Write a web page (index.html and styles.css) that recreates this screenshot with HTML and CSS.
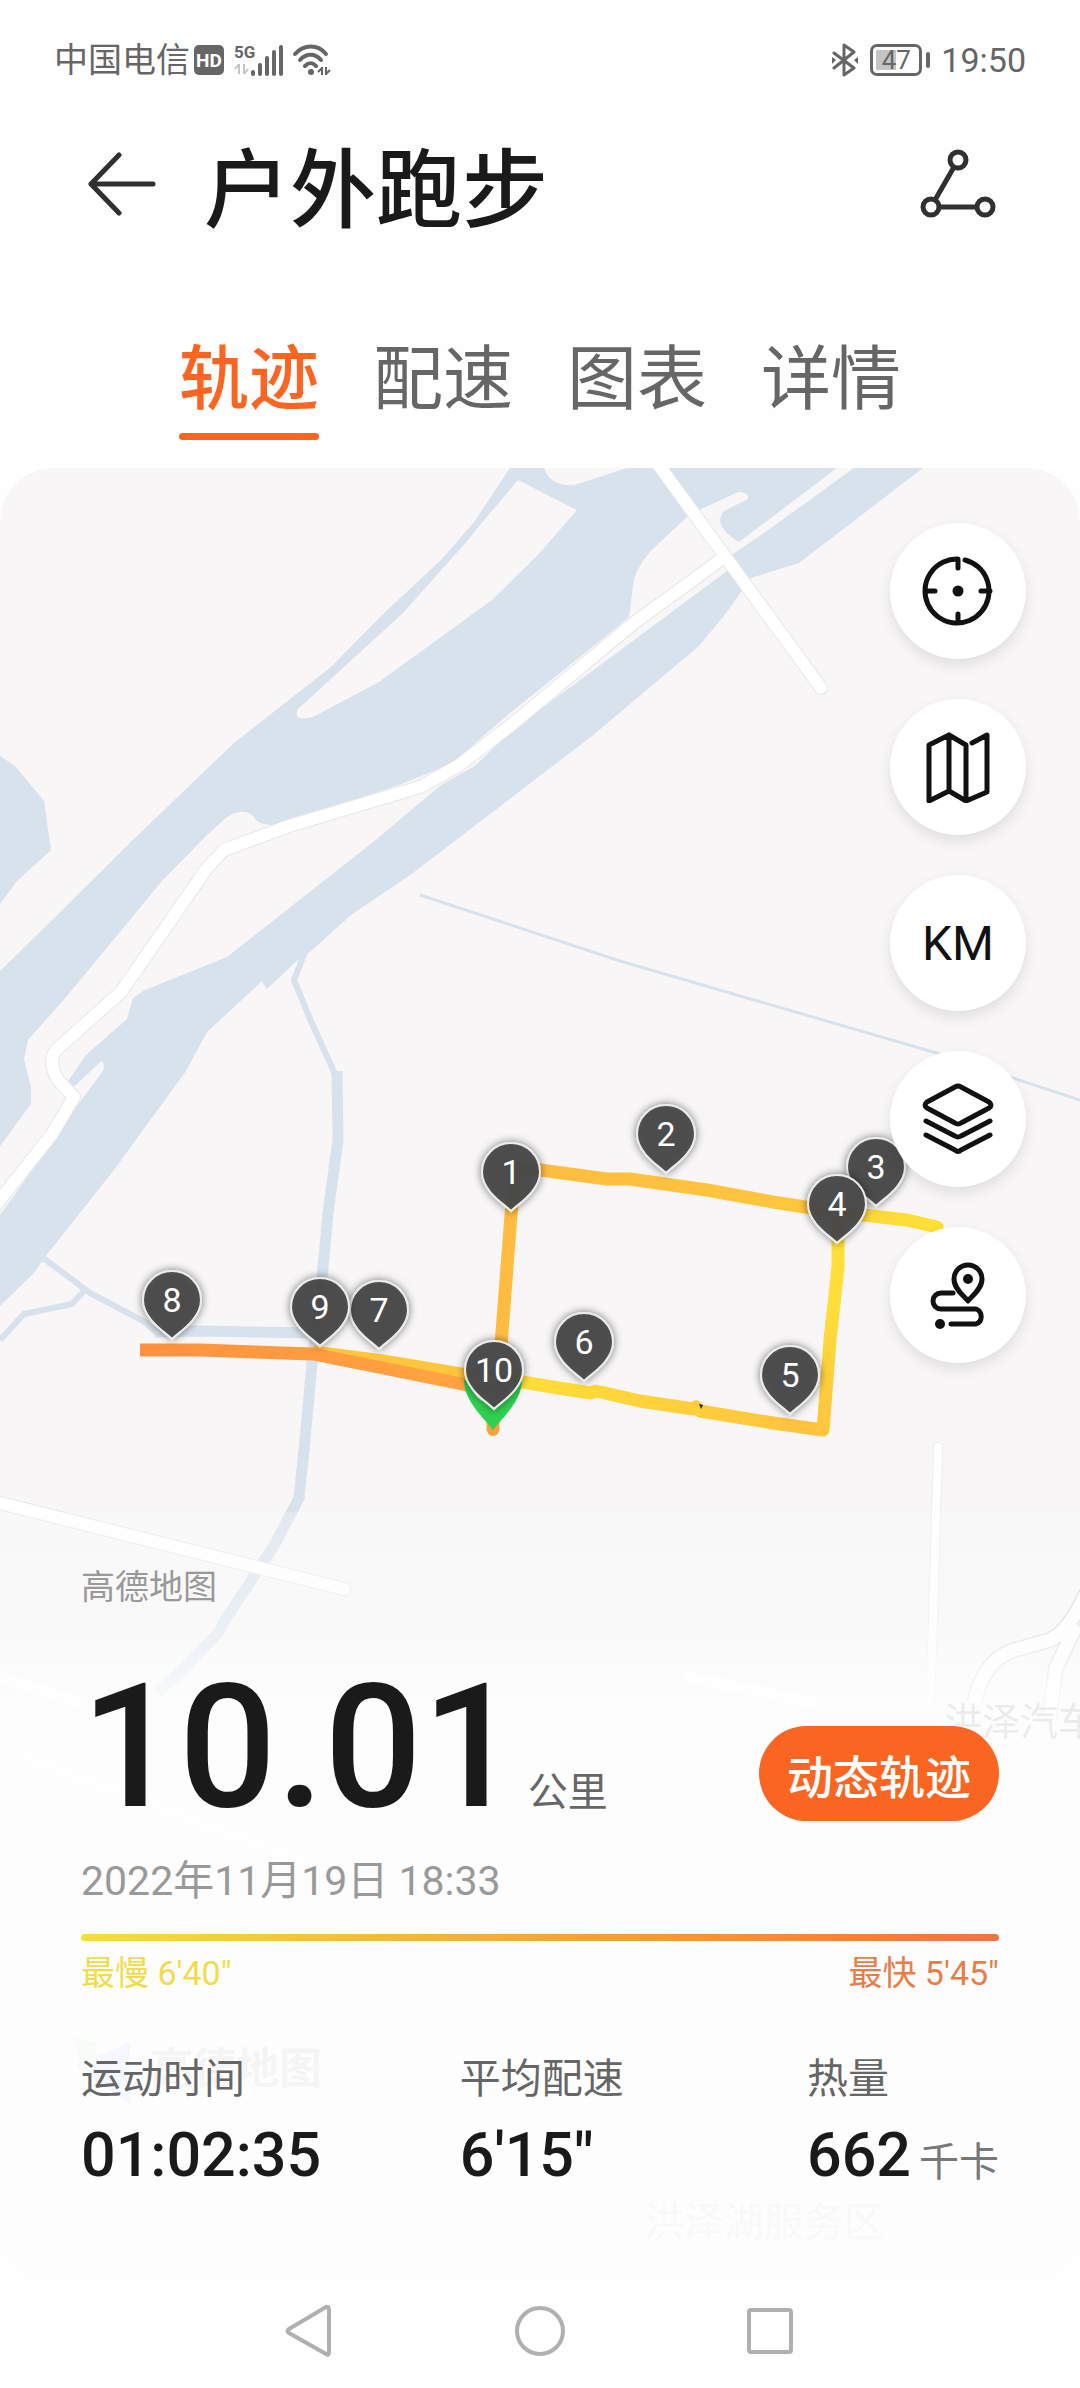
FILE: index.html
```html
<!DOCTYPE html>
<html lang="zh-CN">
<head>
    <meta charset="UTF-8">
    <meta name="viewport" content="width=device-width, initial-scale=1.0">
    <title>户外跑步</title>
    <link rel="stylesheet" href="styles.css">
</head>
<body>
    <div class="status-bar">
        <div class="status-left">
            <span>中国电信</span>
            <span class="hd">HD</span>
            <svg class="signal" width="50" height="34" viewBox="0 0 50 34">
                <text x="0" y="15" class="net">5G</text>
                <path d="M5 21v10M5 21l-4 5M10 31V21M10 31l4-5" stroke="#c4c4c4" stroke-width="2" fill="none"/>
                <path d="M19 29v2M26 22v9M33 15v16M40 9v22M47 4v27" stroke="#666" stroke-width="4" stroke-linecap="round"/>
            </svg>
            <svg class="wifi" width="40" height="34" viewBox="0 0 40 34">
                <path d="M3 11C12 1 26 1 34 11M8 17C14 10 23 10 29 17M13 23C17 19 20 19 24 23" stroke="#666" stroke-width="4" stroke-linecap="round" fill="none"/>
                <circle cx="19" cy="29" r="3" fill="#666"/>
                <path d="M30 24v8M30 25l-4 4M34 32v-8M34 31l4-4" stroke="#666" stroke-width="2" fill="none"/>
            </svg>
        </div>
        <div class="status-right">
            <svg width="26" height="34" viewBox="0 0 26 34">
                <path d="M2 10l20 15-10 7V2l10 7L2 25" stroke="#666" stroke-width="3" stroke-linejoin="round" stroke-linecap="round" fill="none"/>
                <path d="M0 14l4 3-4 4zM26 14l-4 3 4 4z" fill="#666"/>
            </svg>
            <span class="battery">47</span>
            <span>19:50</span>
        </div>
    </div>

    <header class="app-bar">
        <button class="icon-btn" aria-label="返回">
            <svg width="68" height="64" viewBox="0 0 68 64">
                <path d="M31 3L3 32l28 29M3 32h62" stroke="#303030" stroke-width="5" stroke-linecap="round" stroke-linejoin="round" fill="none"/>
            </svg>
        </button>
        <h1>户外跑步</h1>
        <button class="icon-btn" aria-label="分享">
            <svg width="76" height="70" viewBox="0 0 76 70">
                <g stroke="#303030" stroke-width="5" fill="none">
                    <circle cx="38" cy="11" r="8"/>
                    <circle cx="11" cy="58" r="8"/>
                    <circle cx="65" cy="58" r="8"/>
                    <path d="M34 18L15 51M19 58h38"/>
                </g>
            </svg>
        </button>
    </header>

    <nav class="tabs">
        <button class="tab active">轨迹</button>
        <button class="tab">配速</button>
        <button class="tab">图表</button>
        <button class="tab">详情</button>
    </nav>

    <main class="track">
        <svg class="map" viewBox="0 468 1080 1812" preserveAspectRatio="xMidYMin slice">
            <defs>
                <linearGradient id="fast" gradientUnits="userSpaceOnUse" x1="140" y1="0" x2="500" y2="0">
                    <stop offset="0" stop-color="#ff9240"/>
                    <stop offset="1" stop-color="#ffa640"/>
                </linearGradient>
                <linearGradient id="south" gradientUnits="userSpaceOnUse" x1="540" y1="0" x2="822" y2="0">
                    <stop offset="0" stop-color="#ffdd38"/>
                    <stop offset="1" stop-color="#ffc13f"/>
                </linearGradient>
                <linearGradient id="east" gradientUnits="userSpaceOnUse" x1="0" y1="1428" x2="0" y2="1213">
                    <stop offset="0" stop-color="#ffc53f"/>
                    <stop offset=".6" stop-color="#ffdf38"/>
                    <stop offset="1" stop-color="#ffdf38"/>
                </linearGradient>
                <linearGradient id="north" gradientUnits="userSpaceOnUse" x1="511" y1="0" x2="937" y2="0">
                    <stop offset="0" stop-color="#ffbc40"/>
                    <stop offset=".7" stop-color="#ffc63d"/>
                    <stop offset=".8" stop-color="#ffd83a"/>
                    <stop offset="1" stop-color="#ffdf38"/>
                </linearGradient>
                <filter id="shade" x="-40%" y="-40%" width="180%" height="180%">
                    <feDropShadow dx="0" dy="0" stdDeviation="4" flood-color="#000" flood-opacity=".55"/>
                </filter>
                <path id="pin" d="M0 39C-7 32-29 19-29 0A29 29 0 0 1 29 0C29 19 7 32 0 39Z"/>
            </defs>

            <rect y="468" width="1080" height="1812" fill="#f8f6f6"/>

            <!-- water -->
            <g fill="#d8e2ed">
                <path d="M0 756L15 766 44 801 51 850 17 881 0 904Z"/>
                <path d="M510 468L475 521 441 560 382 615 331 667 234 743 138 835 41 931 0 971V1146L31 1104V1087L24 1059 28 1040 67 996 162 881 207 835 227 817Q248 805 256 820 265 828 286 823L399 785 451 764 510 713 606 636 629 617 634 579Q640 560 658 544L689 515 738 492Q750 492 748 499L724 511Q712 525 739 542L837 468H627L575 485Q550 487 544 468Z"/>
                <path d="M854 468H923L799 563 751 578 744 588 723 617 699 646 592 736 413 873 351 915 310 952 301 957 267 989 262 981 234 1007 207 1032 186 1071 114 1170 45 1257 34 1273 0 1306V1215L41 1158 76 1107 103 1071Q106 1060 100 1062L76 1085 69 1088 66 1084 86 1055 127 1019 133 998 145 990 227 957 372 843 441 785 475 766 510 732 727 571 730 556 764 533Z"/>
            </g>
            <path d="M518 480L577 510 537 556 492 600 379 682 313 717Q292 722 298 709L344 667 403 613 468 540 475 531Z" fill="#f8f6f6"/>
            <g fill="none" stroke="#d8e2ed">
                <path d="M420 895L620 961 940 1054 1080 1100" stroke-width="3"/>
                <path d="M305 952L294 980 310 1019 335 1074" stroke-width="6"/>
                <path d="M337 1071L338 1140 328 1213 321 1290 312 1363 304 1450 299 1498 275 1544 227 1617 219 1632 189 1663 158 1693" stroke-width="11"/>
                <path d="M42 1257L90 1293 145 1322 158 1334M85 1290L72 1304 24 1314 0 1340" stroke-width="6"/>
                <path d="M155 1332L200 1331 315 1333" stroke-width="11"/>
            </g>

            <!-- roads -->
            <g fill="none" stroke-linecap="round" stroke-linejoin="round">
                <g stroke="#e8e7e7" stroke-width="14">
                    <path d="M723 558L634 623 510 726 458 766 420 787 289 826 224 850 207 868 121 992 56 1050Q48 1060 57 1079L74 1097 52 1134-8 1210"/>
                    <path d="M655 460L821 688"/>
                    <path d="M-8 1501L344 1589"/>
                </g>
                <g stroke="#fff" stroke-width="12">
                    <path d="M723 558L634 623 510 726 458 766 420 787 289 826 224 850 207 868 121 992 56 1050Q48 1060 57 1079L74 1097 52 1134-8 1210"/>
                    <path d="M655 460L821 688"/>
                    <path d="M-8 1501L344 1589"/>
                    <path d="M0 1677L110 1712M689 1677L813 1703M24 1757L300 1860"/>
                </g>
                <path d="M1086 1594Q1068 1632 1050 1640L1022 1648Q985 1655 975 1700M1074 1630L1056 1668 1050 1712" stroke="#d4d2d2" stroke-width="16"/>
                <path d="M1086 1594Q1068 1632 1050 1640L1022 1648Q985 1655 975 1700M1074 1630L1056 1668 1050 1712" stroke="#fff" stroke-width="13"/>
                <path d="M938 1447L933 1620 930 1700" stroke="#ececec" stroke-width="10"/>
                <path d="M938 1447L933 1620 930 1700" stroke="#fff" stroke-width="8"/>
            </g>
            <text x="944" y="1735" class="place">洪泽汽车</text>
            <text x="644" y="2236" class="place faint">洪泽湖服务区</text>
            <path d="M76 2066l54-24v62z" fill="#74a8ff"/>
            <path d="M74 2038l22 4v22l-14 10z" fill="#9ce08c"/>
            <text x="150" y="2084" class="watermark">高德地图</text>

            <!-- running route, coloured by pace -->
            <g fill="none" stroke-width="13" stroke-linejoin="round">
                <path d="M313 1352L383 1361 467 1375 500 1380" stroke="#ffc63d"/>
                <path d="M140 1350H200L313 1354 383 1368 467 1385 493 1400V1431" stroke="url(#fast)"/>
                <circle cx="493" cy="1430" r="6" fill="#f7a03c" stroke="none"/>
                <path d="M516 1170L511 1215 501 1345" stroke="#ffbc40"/>
                <path d="M511 1168L540 1170 607 1179 630 1179 707 1190 773 1202 837 1212 907 1220 937 1227" stroke="url(#north)" stroke-linecap="round"/>
                <path d="M500 1378L540 1385 590 1393 596 1391 640 1401 693 1409 696 1407 700 1411 773 1423 823 1430" stroke="url(#south)"/>
                <path d="M823 1430L830 1340 838 1267V1213" stroke="url(#east)" stroke-linecap="round"/>
                <path d="M699 1404l4 1-2 4z" fill="#222" stroke="none"/>
            </g>

            <!-- kilometre pins -->
            <path d="M493 1430C486 1420 464 1402 464 1380H522C522 1402 500 1420 493 1430Z" fill="#2fd04f"/>
            <circle cx="493" cy="1382" r="22" fill="#ddd"/>
            <g class="pins">
                <g transform="translate(172 1300)"><use href="#pin"/><text y="12">8</text></g>
                <g transform="translate(379 1310)"><use href="#pin"/><text y="12">7</text></g>
                <g transform="translate(320 1307)"><use href="#pin"/><text y="12">9</text></g>
                <g transform="translate(511 1172)"><use href="#pin"/><text y="12">1</text></g>
                <g transform="translate(666 1134)"><use href="#pin"/><text y="12">2</text></g>
                <g transform="translate(876 1167)"><use href="#pin"/><text y="12">3</text></g>
                <g transform="translate(837 1204)"><use href="#pin"/><text y="12">4</text></g>
                <g transform="translate(790 1375)"><use href="#pin"/><text y="12">5</text></g>
                <g transform="translate(584 1342)"><use href="#pin"/><text y="12">6</text></g>
                <g transform="translate(494 1370)"><use href="#pin"/><text y="12">10</text></g>
            </g>
        </svg>

        <div class="map-tools">
            <button class="tool" aria-label="定位">
                <svg viewBox="0 0 72 72">
                    <path d="M43 5A32 32 0 1 1 36 4V13M36 59v9M4 36h9M59 36h9"/>
                    <circle cx="36" cy="36" r="5.5" class="solid"/>
                </svg>
            </button>
            <button class="tool" aria-label="地图类型">
                <svg viewBox="0 0 72 72">
                    <path d="M50 12L65 4V61L44 70 27 60 7 70V14L27 4 44 14V70M27 4V60"/>
                </svg>
            </button>
            <button class="tool unit">KM</button>
            <button class="tool" aria-label="图层">
                <svg viewBox="0 0 72 72">
                    <path d="M33 4Q36 2 39 4L67 19Q71 22 67 25L39 40Q36 42 33 40L5 25Q1 22 5 19ZM4 38L33 53Q36 55 39 53L68 38M4 52L33 67Q36 70 39 67L68 52"/>
                </svg>
            </button>
            <button class="tool" aria-label="路线">
                <svg viewBox="0 0 72 72">
                    <path d="M46 42C42 37 32 30 32 20A14 14 0 0 1 60 20C60 30 50 37 46 42ZM31 34H19A8 8 0 0 0 19 50H54A8 8 0 0 1 54 65H29"/>
                    <circle cx="46" cy="20" r="5" class="solid"/>
                    <circle cx="18" cy="65" r="5" class="solid"/>
                </svg>
            </button>
        </div>

        <section class="summary">
            <p class="map-source">高德地图</p>
            <div class="distance-row">
                <p class="distance">10.01<span class="unit-label">公里</span></p>
                <button class="play">动态轨迹</button>
            </div>
            <p class="date">2022年11月19日 18:33</p>
            <div class="pace-bar"></div>
            <div class="pace-labels">
                <span class="slow">最慢 6'40"</span>
                <span class="fast">最快 5'45"</span>
            </div>
            <dl class="stats">
                <div>
                    <dt>运动时间</dt>
                    <dd>01:02:35</dd>
                </div>
                <div>
                    <dt>平均配速</dt>
                    <dd>6'15"</dd>
                </div>
                <div>
                    <dt>热量</dt>
                    <dd>662<span class="kcal">千卡</span></dd>
                </div>
            </dl>
        </section>
    </main>

    <footer class="system-nav">
        <button aria-label="返回">
            <svg viewBox="0 0 56 56"><path d="M44 4Q47 3 47 7V49Q47 53 44 51L7 30Q4 28 7 26Z"/></svg>
        </button>
        <button aria-label="主页">
            <svg viewBox="0 0 56 56"><circle cx="28" cy="28" r="23"/></svg>
        </button>
        <button aria-label="最近任务">
            <svg viewBox="0 0 56 56"><rect x="7" y="7" width="42" height="42" rx="2"/></svg>
        </button>
    </footer>
</body>
</html>
```
FILE: styles.css
```css
* { box-sizing: border-box; }
body { margin: 0; background: #fefefe; color: #1a1a1a; font-family: Roboto, "Noto Sans CJK SC", sans-serif; }
h1, p, dl, dd { margin: 0; }
button { padding: 0; border: none; background: none; font-family: inherit; color: inherit; cursor: pointer; }
svg { display: block; }

.status-bar { display: flex; justify-content: space-between; padding: 36px 54px; line-height: 48px; font-size: 34px; color: #666; }
.status-left, .status-right { display: flex; align-items: center; }
.status-right { gap: 12px; }
.hd { width: 30px; height: 30px; margin-left: 4px; border-radius: 5px; background: #666; color: #fff; font-size: 19px; font-weight: 700; line-height: 31px; text-align: center; }
.signal { margin-left: 10px; }
.net { font-size: 17px; font-weight: 700; fill: #666; }
.wifi { margin-left: 8px; }
.battery { position: relative; width: 52px; height: 32px; margin-right: 7px; border: 3px solid #666; border-radius: 7px; background: linear-gradient(#c4c4c4, #c4c4c4) 3px 3px / 20px 20px no-repeat; font-size: 26px; line-height: 27px; text-align: center; }
.battery::after { content: ""; position: absolute; top: 5px; right: -11px; width: 4px; height: 16px; border-radius: 2px; background: #666; }

.app-bar { display: flex; align-items: center; height: 128px; padding: 0 84px 0 88px; }
.app-bar h1 { flex: 1; margin: 16px 0 0 48px; font-size: 86px; font-weight: 500; line-height: 112px; }

.tabs { display: flex; justify-content: center; gap: 54px; padding: 92px 0 28px; }
.tab { padding-bottom: 13px; border-bottom: 7px solid transparent; font-size: 70px; line-height: 80px; color: #666; }
.tab.active { color: #fb6522; font-weight: 500; position: relative; }
.tab.active::after { content: ""; position: absolute; left: 0; right: 0; bottom: -7px; height: 7px; border-radius: 4px; background: #fb6522; }

.track { position: relative; overflow: hidden; border-radius: 54px; }
.map { position: absolute; top: 0; left: 0; width: 100%; height: 100%; }
.place { font-size: 38px; fill: #777; }
.faint { font-size: 40px; fill: #999; }
.watermark { font-size: 43px; font-weight: 700; fill: #777; }
.pins use { fill: #484848; fill-opacity: .93; stroke: #ececec; stroke-width: 2; filter: url(#shade); }
.pins text { fill: #fff; font-size: 34px; text-anchor: middle; }

.map-tools { position: relative; display: flex; flex-direction: column; align-items: flex-end; gap: 40px; padding: 55px 54px 149px; }
.tool { display: flex; align-items: center; justify-content: center; width: 136px; height: 136px; border-radius: 50%; background: #fff; box-shadow: 0 6px 14px rgba(0,0,0,0.1); color: #111; }
.tool svg { width: 72px; height: 72px; fill: none; stroke: #111; stroke-width: 5; stroke-linecap: round; stroke-linejoin: round; }
.tool .solid { fill: #111; stroke: none; }
.unit { font-size: 48px; }

.summary { position: relative; padding: 55px 81px 93px; background: linear-gradient(rgba(252,252,252,0.25), rgba(252,252,252,0.5) 14%, rgba(254,254,254,0.86) 25%, rgba(254,254,254,0.93) 70%, rgba(254,254,254,0.96)); }
.map-source { font-size: 34px; line-height: 40px; color: #999; }
.distance-row { display: flex; justify-content: space-between; align-items: flex-end; margin-top: 54px; }
.distance { display: flex; align-items: baseline; gap: 8px; font-size: 172px; font-weight: 500; line-height: 172px; }
.unit-label { font-size: 40px; font-weight: 400; line-height: 48px; color: #666; }
.play { height: 95px; margin-bottom: 12px; padding: 0 28px; border-radius: 48px; background: #fb6522; color: #fff; font-size: 46px; font-weight: 500; }
.date { margin-top: 24px; font-size: 41px; line-height: 48px; color: #999; }
.pace-bar { height: 7px; margin-top: 29px; border-radius: 4px; background: linear-gradient(to right, #f6dc42, #f4a63e 50%, #ef733f); }
.pace-labels { display: flex; justify-content: space-between; margin-top: 12px; font-size: 34px; line-height: 40px; }
.slow { color: #f3dc4c; }
.fast { color: #ea7c48; }
.stats { display: grid; grid-template-columns: 12fr 11fr auto; margin-top: 62px; }
.stats dt { font-size: 41px; line-height: 48px; color: #666; }
.stats dd { margin-top: 20px; font-size: 61px; font-weight: 500; line-height: 64px; }
.kcal { margin-left: 8px; font-size: 40px; font-weight: 400; line-height: 48px; color: #777; }

.system-nav { display: flex; justify-content: center; align-items: center; gap: 174px; height: 108px; padding-bottom: 6px; }
.system-nav svg { width: 56px; height: 56px; fill: none; stroke: #b0b0b0; stroke-width: 4; }
```
